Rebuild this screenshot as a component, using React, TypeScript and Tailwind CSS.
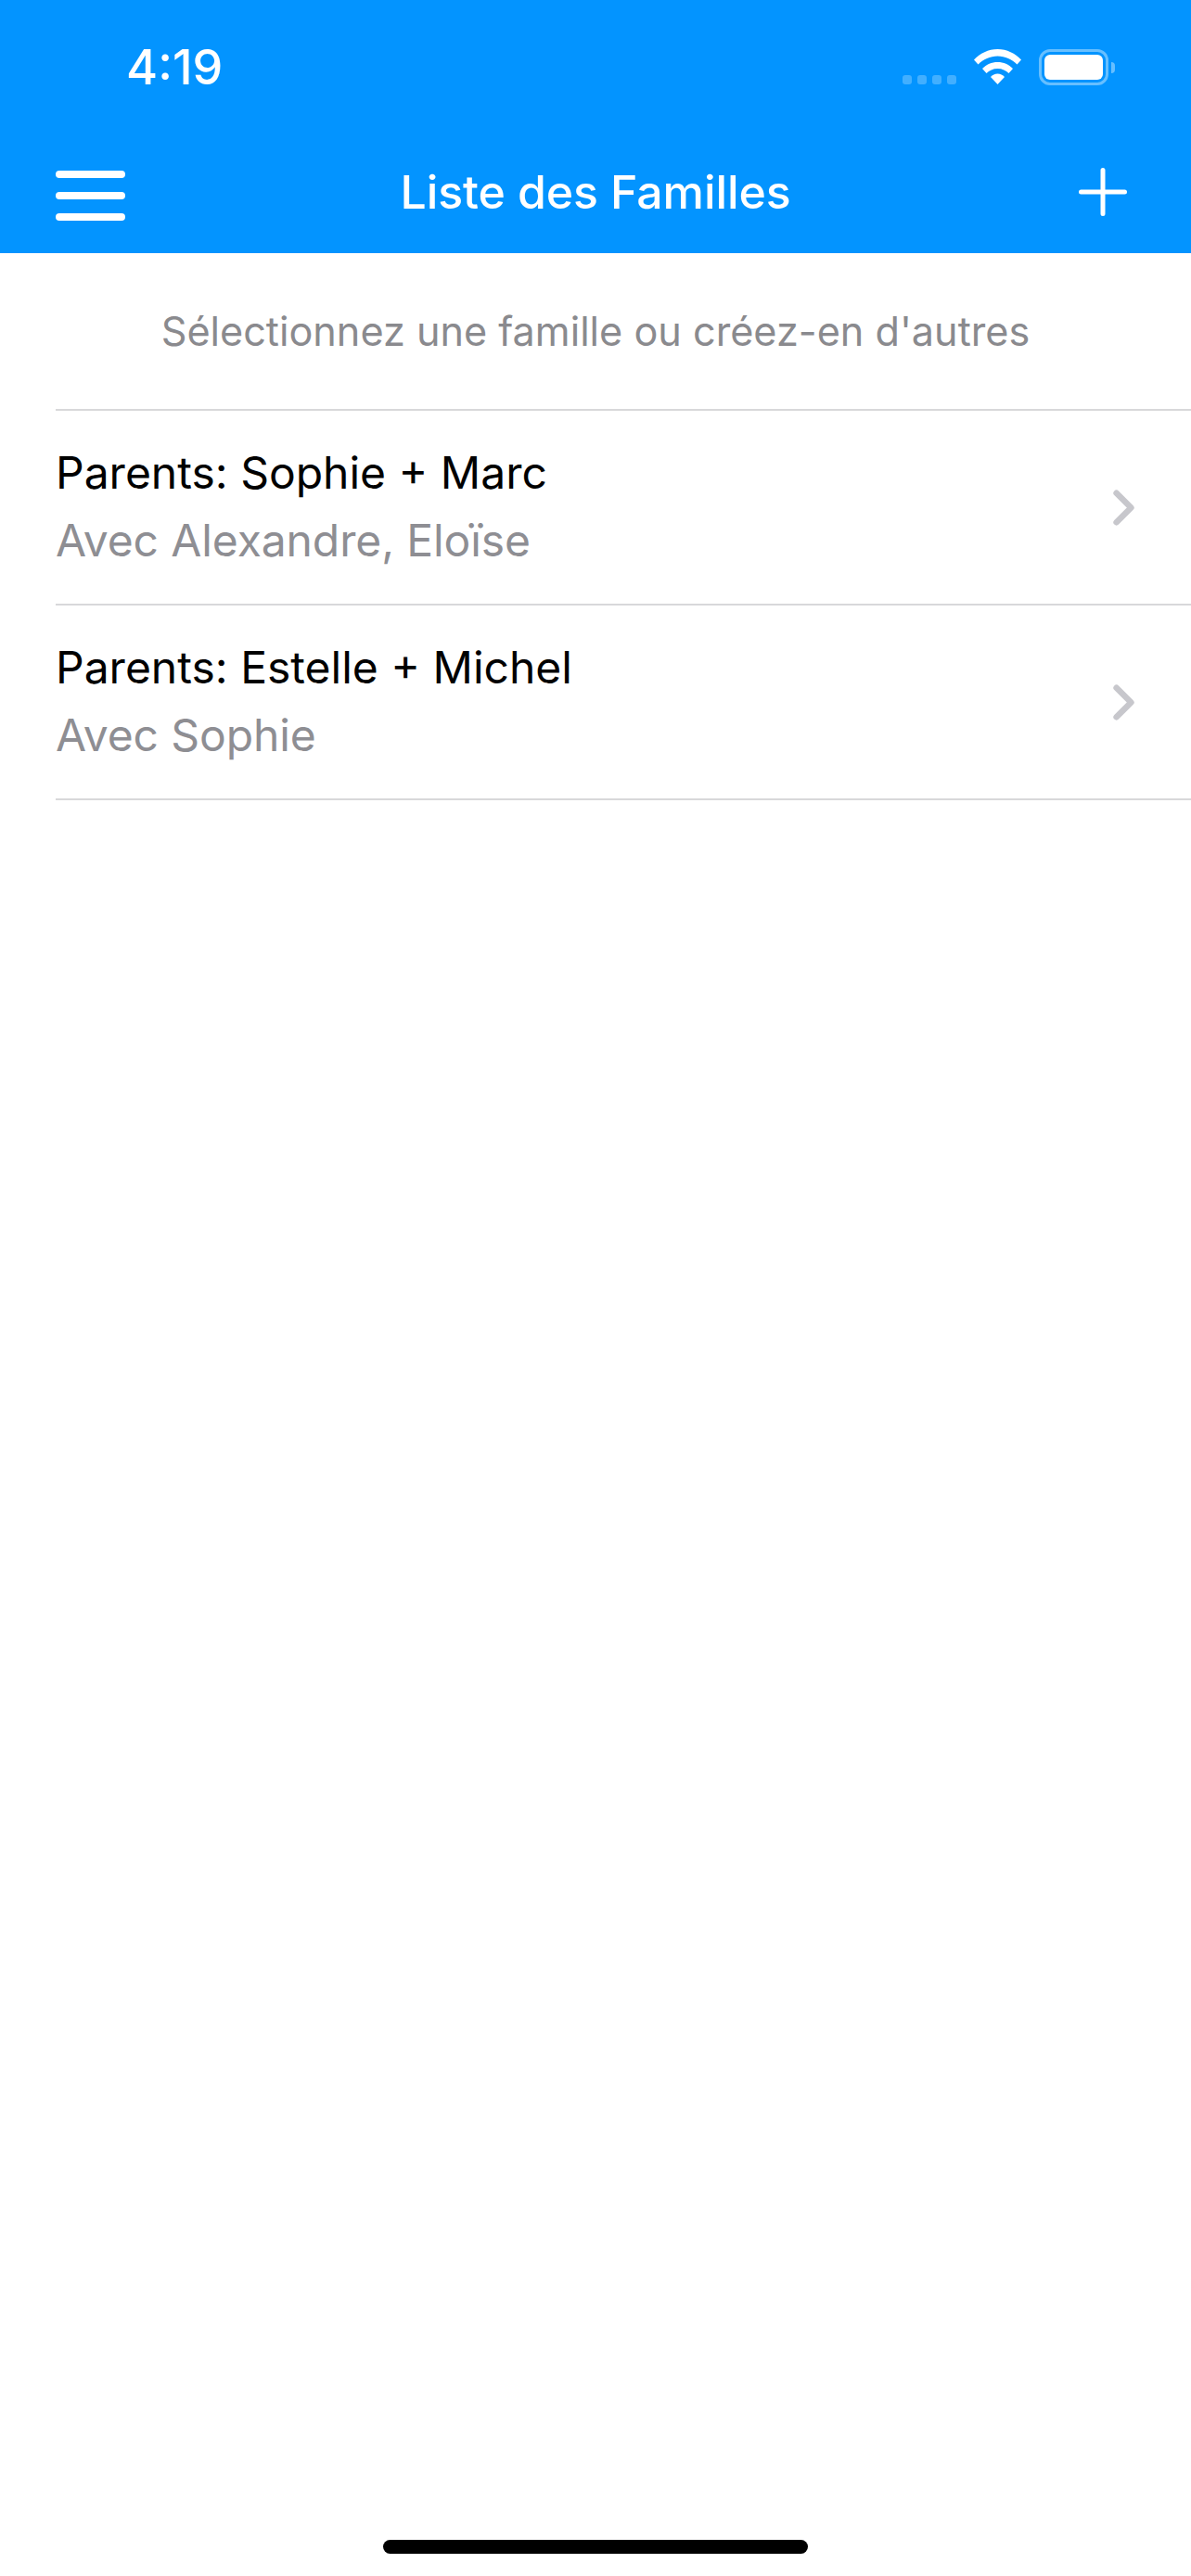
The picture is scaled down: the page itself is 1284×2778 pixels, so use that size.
import { ChevronRight } from 'lucide-react';

const families = [
  { parents: 'Parents: Sophie + Marc', children: 'Avec Alexandre, Eloïse' },
  { parents: 'Parents: Estelle + Michel', children: 'Avec Sophie' },
];

const WifiIcon = () => (
  <svg width="51" height="38" viewBox="0 0 51 38" fill="#fff">
    <path d="M0 11.500C6.500 4.500 15.500 0 25.500 0S44.500 4.500 51 11.500L46.500 16.500C41 11 33.500 7.500 25.500 7.500S10 11 4.500 16.500Z" />
    <path d="M9 21C13.500 16.500 19 14 25.500 14S37.500 16.500 42 21L37.500 26C34.500 23 30.500 21 25.500 21S16.500 23 13.500 26Z" />
    <path d="M18 30C20 28 22.500 26.500 25.500 26.500S31 28 33 30L25.500 38Z" />
  </svg>
);

const BatteryIcon = () => (
  <div className="flex items-center">
    <div className="w-[75px] h-[39px] rounded-[12px] border-[3px] border-white/40 p-[3px]">
      <div className="w-full h-full rounded-[6px] bg-white" />
    </div>
    <div className="ml-[3px] w-[4px] h-[12px] rounded-r-full bg-white/40" />
  </div>
);

const App = () => {
  return (
    <div className="min-h-[2778px] flex flex-col bg-white font-['Inter',sans-serif]">
      {/* Header */}
      <div className="h-[273px] bg-[#0394ff] text-white">
        <div className="h-[169px] flex items-start pl-[136px] pr-[82px]">
          <span className="mt-[42px] text-[52px] leading-[62px] font-medium">4:19</span>
          <div className="ml-auto mt-[53px] flex items-start">
            <div className="mt-[28px] flex gap-[6px]">
              {[0, 1, 2, 3].map(i => (
                <div key={i} className="w-[10px] h-[10px] rounded-[3px] bg-white/25" />
              ))}
            </div>
            <div className="ml-[19px]"><WifiIcon /></div>
            <div className="ml-[19px]"><BatteryIcon /></div>
          </div>
        </div>
        <div className="flex items-center px-[60px] h-[76px]">
          <div className="w-[100px] pt-[8px]">
            <div className="w-[75px] flex flex-col gap-[15px]">
              <div className="h-[8px] rounded-full bg-white" />
              <div className="h-[8px] rounded-full bg-white" />
              <div className="h-[8px] rounded-full bg-white" />
            </div>
          </div>
          <h1 className="flex-1 text-center text-[50px] leading-[60px] font-medium tracking-[-0.1px]">Liste des Familles</h1>
          <div className="w-[100px] flex justify-end pr-[9px]">
            <svg width="52" height="52" viewBox="0 0 52 52" stroke="#fff" strokeWidth="5" strokeLinecap="round">
              <path d="M26 2.500V49.500M2.500 26H49.500" />
            </svg>
          </div>
        </div>
      </div>

      {/* List */}
      <p className="h-[168px] pt-[58px] text-center text-[43.2px] leading-[52px] text-[#8a8a8e]">
        Sélectionnez une famille ou créez-en d'autres
      </p>
      <div className="ml-[60px] border-t-2 border-[#d8d8da]">
        {families.map(family => (
          <div key={family.parents} className="h-[210px] flex items-center pr-[41px] border-b-2 border-[#d8d8da]">
            <div className="flex-1">
              <div className="text-[48px] leading-[72px] text-black">{family.parents}</div>
              <div className="text-[48px] leading-[74px] text-[#8e8e93] tracking-[-0.1px]">{family.children}</div>
            </div>
            <ChevronRight size={63} strokeWidth={2.5} className="text-[#c7c7cc]" />
          </div>
        ))}
      </div>

      {/* Home indicator */}
      <div className="mt-auto mb-[24px] mx-auto w-[458px] h-[15px] rounded-full bg-black" />
    </div>
  );
};

export default App;
